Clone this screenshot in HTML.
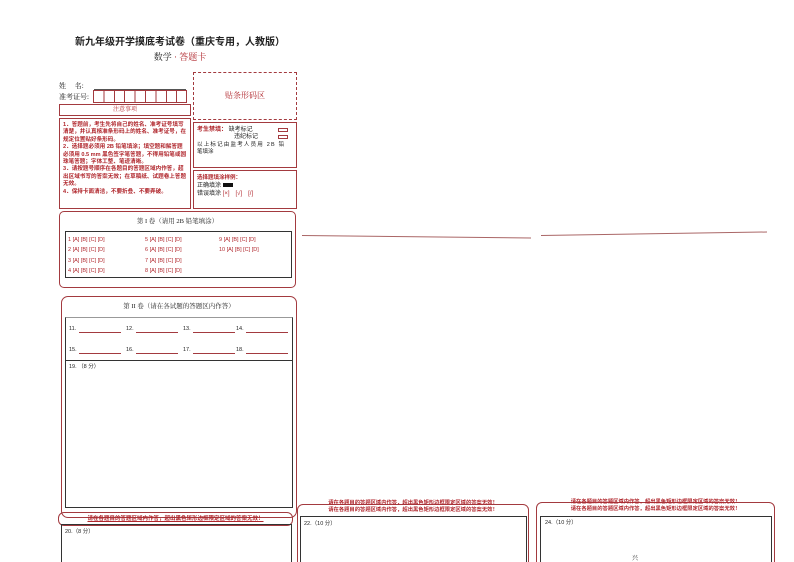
<!DOCTYPE html>
<html><head><meta charset="utf-8"><style>
*{margin:0;padding:0;box-sizing:border-box}
html,body{width:794px;height:562px;overflow:hidden}
body{background:#fff;position:relative;font-family:"Liberation Serif","Noto Serif CJK SC","Noto Sans CJK SC",serif;color:#222}
.a{position:absolute;white-space:nowrap}
.r{color:#b0262c}
.bx{position:absolute;border:1px solid #a33a3f}
.bk{position:absolute;border:1.3px solid #333}
.s{font-size:5.5px;line-height:7.3px;font-family:"Liberation Sans","Noto Sans CJK SC",sans-serif}
.rl{position:absolute;height:0;border-top:1px solid #a33a3f}
</style></head><body>
<div class="a" style="left:0;width:360px;top:33px;text-align:center;font-size:10px;font-weight:bold;font-family:'Liberation Serif','Noto Sans CJK SC',serif">新九年级开学摸底考试卷（重庆专用，人教版）</div>
<div class="a" style="left:0;width:360px;top:50px;text-align:center;font-size:9px">数学 <span class="r">· 答题卡</span></div>

<div class="a" style="left:59px;top:81px;font-size:7px">姓　 名:</div>
<div class="rl" style="left:94px;top:89px;width:92px;border-color:#555"></div>
<div class="a" style="left:59px;top:92px;font-size:7px">准考证号:</div>
<div class="bx" style="left:93px;top:90px;width:94px;height:13px;background:repeating-linear-gradient(90deg,transparent 0 9.4px,#a33a3f 9.4px 10.4px)"></div>

<div class="bx" style="left:59px;top:104px;width:132px;height:12px;text-align:center;font-size:6px;line-height:10px" ><span class="r">注意事项</span></div>
<div class="bx r s" style="left:59px;top:118px;width:132px;height:91px;padding:3px 3px;white-space:normal;font-size:5.6px;line-height:7.4px;font-weight:bold">1．答题前，考生先将自己的姓名、准考证号填写清楚，并认真核准条形码上的姓名、准考证号，在规定位置贴好条形码。<br>2．选择题必须用 2B 铅笔填涂；填空题和解答题必须用 0.5 mm 黑色签字笔答题，不得用铅笔或圆珠笔答题；字体工整、笔迹清晰。<br>3．请按题号顺序在各题目的答题区域内作答，超出区域书写的答案无效；在草稿纸、试题卷上答题无效。<br>4．保持卡面清洁，不要折叠、不要弄破。</div>

<div class="a" style="left:193px;top:72px;width:104px;height:48px;border:1px dashed #a33a3f;text-align:center;line-height:46px;font-size:8px"><span class="r">贴条形码区</span></div>

<div class="bx" style="left:193px;top:122px;width:104px;height:46px"></div>
<div class="a s" style="left:197px;top:127px;font-size:6px"><span class="r" style="font-weight:bold">考生禁填：</span> 缺考标记</div>
<div class="a s" style="left:234px;top:134px;font-size:6px">违纪标记</div>
<div class="a" style="left:278px;top:128px;width:10px;height:4px;border:1px solid #a33a3f"></div>
<div class="a" style="left:278px;top:135px;width:10px;height:4px;border:1px solid #a33a3f"></div>
<div class="a s" style="left:197px;top:142px;letter-spacing:1.2px">以上标记由监考人员用 2B 铅</div>
<div class="a s" style="left:197px;top:149px">笔填涂</div>

<div class="bx" style="left:193px;top:170px;width:104px;height:39px"></div>
<div class="a s r" style="left:197px;top:175px;font-weight:bold">选择题填涂样例：</div>
<div class="a s" style="left:197px;top:183px;font-size:6px">正确填涂 <span style="display:inline-block;width:10px;height:4px;background:#111"></span></div>
<div class="a s" style="left:197px;top:191px;font-size:6px">错误填涂 <span class="r">[×]　[√]　[/]</span></div>

<div class="bx" style="left:59px;top:211px;width:237px;height:77px;border-radius:5px"></div>
<div class="a" style="left:59px;width:237px;top:216px;text-align:center;font-size:6.5px">第 I 卷（请用 2B 铅笔填涂）</div>
<div class="bk" style="left:65px;top:231px;width:227px;height:47px"></div>
<div class="a s r" style="left:68px;top:235px;line-height:10.3px">1 [A] [B] [C] [D]<br>2 [A] [B] [C] [D]<br>3 [A] [B] [C] [D]<br>4 [A] [B] [C] [D]</div>
<div class="a s r" style="left:145px;top:235px;line-height:10.3px">5 [A] [B] [C] [D]<br>6 [A] [B] [C] [D]<br>7 [A] [B] [C] [D]<br>8 [A] [B] [C] [D]</div>
<div class="a s r" style="left:219px;top:235px;line-height:10.3px">9 [A] [B] [C] [D]<br>10 [A] [B] [C] [D]</div>

<div class="bx" style="left:61px;top:296px;width:236px;height:222px;border-radius:7px"></div>
<div class="a" style="left:61px;width:236px;top:301px;text-align:center;font-size:6.5px">第 II 卷（请在各试题的答题区内作答）</div>
<div class="bk" style="left:65px;top:317px;width:228px;height:191px;border-top-color:#999"></div>
<div class="rl" style="left:66px;top:360px;width:226px;border-color:#333"></div>
<div class="a s" style="left:69px;top:326px">11.</div><div class="rl" style="left:79px;top:332px;width:42px"></div>
<div class="a s" style="left:126px;top:326px">12.</div><div class="rl" style="left:136px;top:332px;width:42px"></div>
<div class="a s" style="left:183px;top:326px">13.</div><div class="rl" style="left:193px;top:332px;width:42px"></div>
<div class="a s" style="left:236px;top:326px">14.</div><div class="rl" style="left:246px;top:332px;width:42px"></div>
<div class="a s" style="left:69px;top:347px">15.</div><div class="rl" style="left:79px;top:353px;width:42px"></div>
<div class="a s" style="left:126px;top:347px">16.</div><div class="rl" style="left:136px;top:353px;width:42px"></div>
<div class="a s" style="left:183px;top:347px">17.</div><div class="rl" style="left:193px;top:353px;width:42px"></div>
<div class="a s" style="left:236px;top:347px">18.</div><div class="rl" style="left:246px;top:353px;width:42px"></div>
<div class="a s" style="left:69px;top:364px">19. （8 分）</div>

<div class="bx" style="left:58px;top:512px;width:235px;height:14px;border-radius:6px"></div>
<div class="a r" style="left:58px;width:235px;top:514px;text-align:center;font-size:5.5px;font-weight:bold;text-decoration:underline;font-family:'Liberation Sans','Noto Sans CJK SC',sans-serif">请在各题目的答题区域内作答，超出黑色矩形边框限定区域的答案无效！</div>
<div class="bk" style="left:61px;top:524px;width:231px;height:45px"></div>
<div class="a s" style="left:65px;top:529px">20.（8 分）</div>

<div class="bx" style="left:297px;top:504px;width:232px;height:70px;border-radius:6px"></div>
<div class="a r" style="left:297px;width:232px;top:500px;text-align:center;font-size:5.3px;line-height:7px;font-weight:bold;font-family:'Liberation Sans','Noto Sans CJK SC',sans-serif">请在各题目的答题区域内作答，超出黑色矩形边框限定区域的答案无效！<br>请在各题目的答题区域内作答，超出黑色矩形边框限定区域的答案无效！</div>
<div class="bk" style="left:300px;top:516px;width:227px;height:55px"></div>
<div class="a s" style="left:304px;top:521px">22.（10 分）</div>

<div class="bx" style="left:536px;top:502px;width:239px;height:70px;border-radius:6px"></div>
<div class="a r" style="left:536px;width:239px;top:499px;text-align:center;font-size:5.3px;line-height:7px;font-weight:bold;font-family:'Liberation Sans','Noto Sans CJK SC',sans-serif">请在各题目的答题区域内作答，超出黑色矩形边框限定区域的答案无效！<br>请在各题目的答题区域内作答，超出黑色矩形边框限定区域的答案无效！</div>
<div class="bk" style="left:540px;top:516px;width:232px;height:55px"></div>
<div class="a s" style="left:545px;top:520px">24.（10 分）</div>
<div class="a" style="left:632px;top:553px;font-size:6px">兴</div>

<svg class="a" style="left:0;top:0" width="794" height="562"><line x1="302" y1="235.5" x2="531" y2="238" stroke="#a66" stroke-width="1"/><line x1="541" y1="235.5" x2="767" y2="232" stroke="#a66" stroke-width="1"/></svg>
</body></html>
